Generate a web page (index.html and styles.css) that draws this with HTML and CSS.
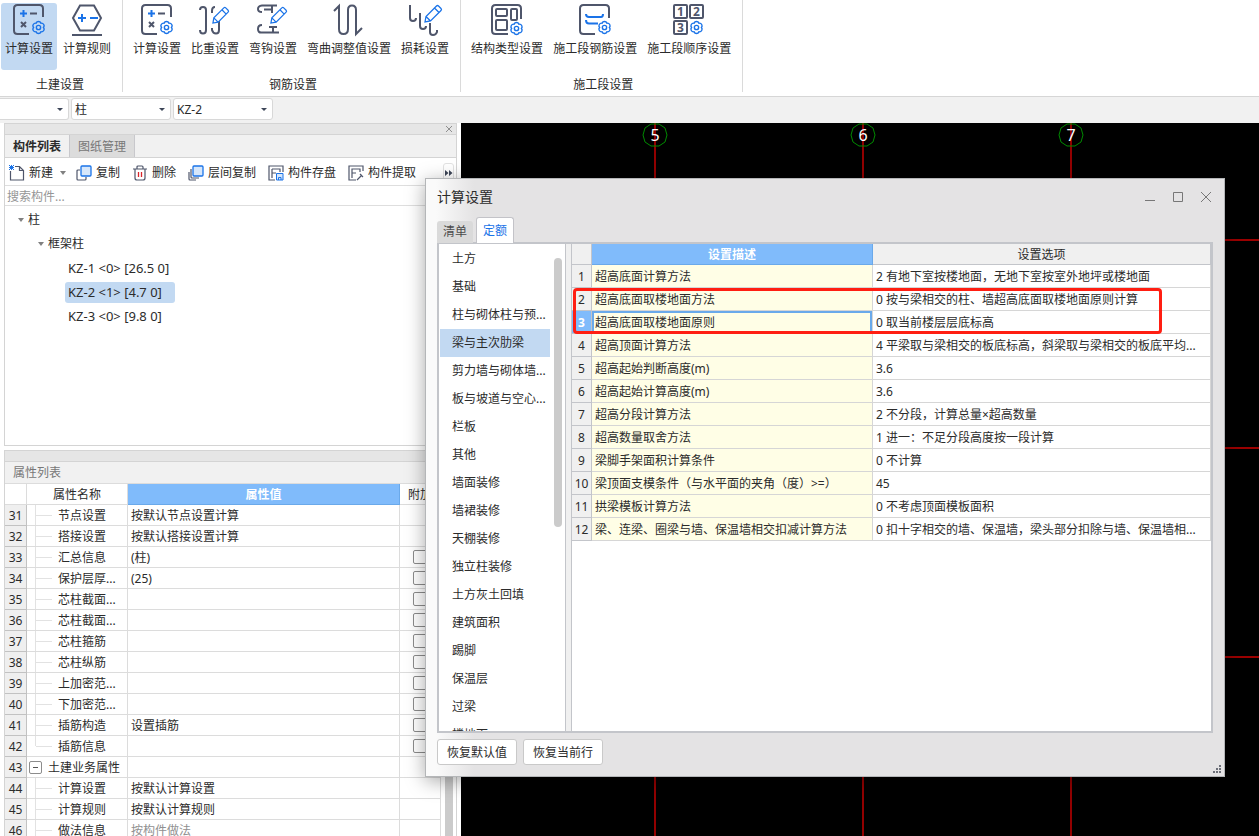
FILE: index.html
```html
<!DOCTYPE html>
<html lang="zh-CN">
<head>
<meta charset="utf-8">
<title>计算设置</title>
<link rel="stylesheet" href="styles.css">
</head>
<body>
<svg class="defs" aria-hidden="true">
  <symbol id="gear" viewBox="0 0 14 14">
    <path class="b" d="M11.600 7A2.450 2.450 0 0 1 9.300 11A2.450 2.450 0 0 1 4.700 11A2.450 2.450 0 0 1 2.400 7A2.450 2.450 0 0 1 4.700 3A2.450 2.450 0 0 1 9.300 3A2.450 2.450 0 0 1 11.600 7Z"/>
    <circle class="b" cx="7" cy="7" r="2"/>
  </symbol>
  <symbol id="calc" viewBox="0 0 32 32">
    <path class="d" d="M30 13V4.500Q30 1 26.500 1H4.500Q1 1 1 4.500V26.500Q1 30 4.500 30H16"/>
    <path class="h" d="M7 9.500H14M10.500 6V13"/>
    <path class="d" d="M17 9.500H24M8 18L13 23M13 18L8 23"/>
    <use href="#gear" x="18" y="16" width="15" height="15"/>
  </symbol>
  <symbol id="pencil" viewBox="0 0 20 20">
    <path class="b w" d="M2 18L3 12.500L13.500 2Q14.500 1 15.500 2L18 4.500Q19 5.500 18 6.500L7.500 17ZM3 12.500L7.500 17M11.500 4L16 8.500"/>
  </symbol>
</svg>

<header class="ribbon">
  <section class="group first">
    <div class="cmds">
      <button class="cmd on"><svg viewBox="0 0 32 32"><use href="#calc"/></svg>计算设置</button>
      <button class="cmd"><svg viewBox="0 0 32 32"><path class="d" d="M9 1.500H23L30 14L23 26.500H9L2 14ZM1 31H31"/><path class="h" d="M7 14H15M11 10V18M19 14H27"/></svg>计算规则</button>
    </div>
    <h2>土建设置</h2>
  </section>
  <section class="group">
    <div class="cmds">
      <button class="cmd"><svg viewBox="0 0 32 32"><use href="#calc"/></svg>计算设置</button>
      <button class="cmd"><svg viewBox="0 0 32 32"><path class="d" d="M1 6Q1 3 4 3T7 6V26Q7 29.500 4 29.500T1 26M13 9V7Q13 3 16 3M20 17V26Q20 29.500 17 29.500T13 26V24"/><use href="#pencil" x="12" y="2" width="19" height="19"/></svg>比重设置</button>
      <button class="cmd"><svg viewBox="0 0 32 32"><path class="d" d="M5 8Q1 8 1 5T5 1.500H20M7 5.500H16M15 2V9M5 21Q1 21 1 25T5 28.500H22M12 23H20M16 23V28"/><use href="#pencil" x="12" y="2" width="19" height="19"/></svg>弯钩设置</button>
      <button class="cmd"><svg viewBox="0 0 32 32"><path class="d" d="M1 7L6 2V25Q6 30 10.500 30T15 25V6Q15 1.500 19 1.500T23 6V30L29 24"/></svg>弯曲调整值设置</button>
      <button class="cmd"><svg viewBox="0 0 32 32"><path class="d" d="M1 1V14Q1 17 4 17T7 14M11 9V22Q11 25 14 25T17 22M21 19V28Q21 31 24 31T28 28V26"/><use href="#pencil" x="14" y="0" width="20" height="20"/></svg>损耗设置</button>
    </div>
    <h2>钢筋设置</h2>
  </section>
  <section class="group">
    <div class="cmds">
      <button class="cmd"><svg viewBox="0 0 32 32"><path class="d" d="M30 15V4.500Q30 1 26.500 1H4.500Q1 1 1 4.500V26.500Q1 30 4.500 30H17"/><rect class="d" x="5" y="5" width="11" height="7" rx="1"/><rect class="d" x="20" y="5" width="6" height="11" rx="1"/><rect class="d" x="5" y="16" width="11" height="10" rx="1"/><use href="#gear" x="18" y="17" width="15" height="15"/></svg>结构类型设置</button>
      <button class="cmd"><svg viewBox="0 0 32 32"><path class="d" d="M30 14V4.500Q30 1 26.500 1H4.500Q1 1 1 4.500V26.500Q1 30 4.500 30H16"/><path class="h" d="M7 10Q7 13 10 13H22Q24 13 24 10M7 16Q7 19.500 10 19.500H19"/><use href="#gear" x="18" y="16" width="15" height="15"/></svg>施工段钢筋设置</button>
      <button class="cmd"><svg viewBox="0 0 32 32"><rect class="d" x="1" y="1" width="13" height="13" rx="1"/><rect class="d" x="17" y="1" width="13" height="13" rx="1"/><rect class="d" x="1" y="17" width="13" height="13" rx="1"/><g class="digit"><text x="7.500" y="12">1</text><text x="23.500" y="12">2</text><text x="7.500" y="28">3</text></g><use href="#gear" x="16" y="16" width="15" height="15"/></svg>施工段顺序设置</button>
    </div>
    <h2>施工段设置</h2>
  </section>
</header>

<nav class="combos">
  <span class="combo short"><select aria-label="楼层"><option></option></select></span>
  <span class="combo"><select aria-label="构件类型"><option>柱</option></select></span>
  <span class="combo"><select aria-label="构件"><option>KZ-2</option></select></span>
</nav>

<main class="work">
  <aside class="side">
    <section class="panel parts">
      <div class="strip"><button class="shut" aria-label="关闭"><svg viewBox="0 0 8 8"><path d="M1 1L7 7M7 1L1 7"/></svg></button></div>
      <div class="ptabs"><button class="ptab on">构件列表</button><button class="ptab">图纸管理</button></div>
      <div class="tools">
        <button class="tool"><svg viewBox="0 0 16 16"><path class="n" d="M6 1.500H10.500L14.500 5.500V15H1.500V6M10.500 1.500V5.500H14.500"/><path class="b t" d="M0 0L5 5M5 0L0 5M2.500 0V5M0 2.500H5"/></svg>新建<i class="caret"></i></button>
        <button class="tool"><svg viewBox="0 0 16 16"><path class="n" d="M4 5H2Q1 5 1 6V14Q1 15 2 15H9Q10 15 10 14V12"/><rect class="b f" x="5" y="1" width="10" height="10" rx="1"/></svg>复制</button>
        <button class="tool"><svg viewBox="0 0 16 16"><path class="n" d="M1 4H15M5 4V2Q5 1 6 1H10Q11 1 11 2V4M3 4V13Q3 15 5 15H11Q13 15 13 13V4"/><path class="r" d="M6.500 7V12M9.500 7V12"/></svg>删除</button>
        <button class="tool"><svg viewBox="0 0 16 16"><path class="n" d="M3 4V12Q3 13 4 13H11M1 7V14Q1 15 2 15H8"/><rect class="b f" x="5" y="1" width="10" height="10" rx="1"/></svg>层间复制</button>
        <button class="tool"><svg viewBox="0 0 16 16"><path class="n" d="M15 7V1H1V15H7M4 13V4M4 4H12V7M4 8H8"/><path class="b t f" d="M8.500 8.500H15V15H8.500ZM10.500 15V12.500H13V15"/></svg>构件存盘</button>
        <button class="tool"><svg viewBox="0 0 16 16"><path class="n" d="M15 6V1H1V15H8M4 13V4H12V7M4 8H8M9 15L14 10M12 9L15 12"/></svg>构件提取</button>
        <button class="more" aria-label="更多"><svg viewBox="0 0 8 6"><path d="M0 0L3.500 3L0 6ZM4 0L7.500 3L4 6Z"/></svg></button>
      </div>
      <input class="search" type="text" placeholder="搜索构件..." aria-label="搜索构件">
      <ul class="tree">
        <li class="l1"><i class="caret"></i>柱</li>
        <li class="l2"><i class="caret"></i>框架柱</li>
        <li class="l3"><span>KZ-1 &lt;0&gt; [26.5 0]</span></li>
        <li class="l3"><span class="on">KZ-2 &lt;1&gt; [4.7 0]</span></li>
        <li class="l3"><span>KZ-3 &lt;0&gt; [9.8 0]</span></li>
      </ul>
    </section>

    <section class="panel props">
      <div class="strip"></div>
      <h3>属性列表</h3>
      <div class="pbody">
        <table class="ptable">
          <colgroup><col class="c0"><col class="c1"><col class="c2"><col class="c3"></colgroup>
          <thead><tr><th></th><th>属性名称</th><th class="hot">属性值</th><th class="clip">附加</th></tr></thead>
          <tbody>
            <tr><td>31</td><td>节点设置</td><td>按默认节点设置计算</td><td></td></tr>
            <tr><td>32</td><td>搭接设置</td><td>按默认搭接设置计算</td><td></td></tr>
            <tr><td>33</td><td>汇总信息</td><td>(柱)</td><td><input type="checkbox" aria-label="汇总信息"></td></tr>
            <tr><td>34</td><td>保护层厚...</td><td>(25)</td><td><input type="checkbox" aria-label="保护层厚"></td></tr>
            <tr><td>35</td><td>芯柱截面...</td><td></td><td><input type="checkbox" aria-label="芯柱截面 35"></td></tr>
            <tr><td>36</td><td>芯柱截面...</td><td></td><td><input type="checkbox" aria-label="芯柱截面 36"></td></tr>
            <tr><td>37</td><td>芯柱箍筋</td><td></td><td><input type="checkbox" aria-label="芯柱箍筋"></td></tr>
            <tr><td>38</td><td>芯柱纵筋</td><td></td><td><input type="checkbox" aria-label="芯柱纵筋"></td></tr>
            <tr><td>39</td><td>上加密范...</td><td></td><td><input type="checkbox" aria-label="上加密范围"></td></tr>
            <tr><td>40</td><td>下加密范...</td><td></td><td><input type="checkbox" aria-label="下加密范围"></td></tr>
            <tr><td>41</td><td>插筋构造</td><td>设置插筋</td><td><input type="checkbox" aria-label="插筋构造"></td></tr>
            <tr class="last"><td>42</td><td>插筋信息</td><td></td><td><input type="checkbox" aria-label="插筋信息"></td></tr>
            <tr class="head"><td>43</td><td><button class="fold" aria-label="折叠"></button>土建业务属性</td><td></td><td></td></tr>
            <tr><td>44</td><td>计算设置</td><td>按默认计算设置</td><td></td></tr>
            <tr><td>45</td><td>计算规则</td><td>按默认计算规则</td><td></td></tr>
            <tr><td>46</td><td>做法信息</td><td class="dim">按构件做法</td><td></td></tr>
          </tbody>
        </table>
        <div class="vbar"></div>
      </div>
    </section>
  </aside>

  <div class="canvas">
    <svg class="grid" aria-label="轴网">
      <path class="axis" d="M194 0V720M402 0V720M610 0V720"/>
      <path class="axis" d="M0 117H3000M0 325H3000M0 534H3000"/>
      <g class="bub">
        <path d="M190 1H198L204 5L206 12L204 19L198 23H190L184 19L182 12L184 5Z"/>
        <path d="M398 1H406L412 5L414 12L412 19L406 23H398L392 19L390 12L392 5Z"/>
        <path d="M606 1H614L620 5L622 12L620 19L614 23H606L600 19L598 12L600 5Z"/>
      </g>
      <g class="num"><text x="194" y="18">5</text><text x="402" y="18">6</text><text x="610" y="18">7</text></g>
    </svg>
  </div>
</main>

<div class="dialog" role="dialog" aria-labelledby="dt">
  <div class="title">
    <h1 id="dt">计算设置</h1>
    <button aria-label="最小化"><svg viewBox="0 0 12 12"><path d="M1 9.500H11"/></svg></button>
    <button aria-label="最大化"><svg viewBox="0 0 12 12"><path d="M1.500 1.500H10.500V10.500H1.500Z"/></svg></button>
    <button aria-label="关闭"><svg viewBox="0 0 12 12"><path d="M1 1L11 11M11 1L1 11"/></svg></button>
  </div>
  <div class="dtabs"><button class="dtab">清单</button><button class="dtab on">定额</button></div>
  <div class="dbody">
    <div class="cats">
      <ul>
        <li>土方</li><li>基础</li><li>柱与砌体柱与预...</li><li class="on">梁与主次肋梁</li><li>剪力墙与砌体墙...</li><li>板与坡道与空心...</li><li>栏板</li><li>其他</li><li>墙面装修</li><li>墙裙装修</li><li>天棚装修</li><li>独立柱装修</li><li>土方灰土回填</li><li>建筑面积</li><li>踢脚</li><li>保温层</li><li>过梁</li><li>楼地面</li>
      </ul>
      <div class="thumb"></div>
    </div>
    <div class="rules">
      <table class="rtable">
        <colgroup><col class="r0"><col class="r1"><col></colgroup>
        <thead><tr><th></th><th class="hot">设置描述</th><th>设置选项</th></tr></thead>
        <tbody>
          <tr><td>1</td><td>超高底面计算方法</td><td>2 有地下室按楼地面，无地下室按室外地坪或楼地面</td></tr>
          <tr><td>2</td><td>超高底面取楼地面方法</td><td>0 按与梁相交的柱、墙超高底面取楼地面原则计算</td></tr>
          <tr class="cur"><td>3</td><td>超高底面取楼地面原则</td><td>0 取当前楼层层底标高</td></tr>
          <tr><td>4</td><td>超高顶面计算方法</td><td>4 平梁取与梁相交的板底标高，斜梁取与梁相交的板底平均...</td></tr>
          <tr><td>5</td><td>超高起始判断高度(m)</td><td>3.6</td></tr>
          <tr><td>6</td><td>超高起始计算高度(m)</td><td>3.6</td></tr>
          <tr><td>7</td><td>超高分段计算方法</td><td>2 不分段，计算总量×超高数量</td></tr>
          <tr><td>8</td><td>超高数量取舍方法</td><td>1 进一：不足分段高度按一段计算</td></tr>
          <tr><td>9</td><td>梁脚手架面积计算条件</td><td>0 不计算</td></tr>
          <tr><td>10</td><td>梁顶面支模条件（与水平面的夹角（度）&gt;=）</td><td>45</td></tr>
          <tr><td>11</td><td>拱梁模板计算方法</td><td>0 不考虑顶面模板面积</td></tr>
          <tr><td>12</td><td>梁、连梁、圈梁与墙、保温墙相交扣减计算方法</td><td>0 扣十字相交的墙、保温墙，梁头部分扣除与墙、保温墙相...</td></tr>
        </tbody>
      </table>
      <div class="mark"></div>
    </div>
  </div>
  <div class="foot"><button>恢复默认值</button><button>恢复当前行</button></div>
  <svg class="grip" viewBox="0 0 8 8"><path d="M6 0h2v2h-2zM3 3h2v2h-2zM6 3h2v2h-2zM0 6h2v2h-2zM3 6h2v2h-2zM6 6h2v2h-2z"/></svg>
</div>
</body>
</html>
```

FILE: styles.css
```css
* { box-sizing: border-box; }
body {
  margin: 0;
  height: 100vh;
  display: flex;
  flex-direction: column;
  overflow: hidden;
  position: relative;
  background: #f1f1f1;
  color: #2b2b2b;
  font: 12px/18px "Noto Sans", "Noto Sans CJK SC", sans-serif;
}
button, input, select { font: inherit; color: inherit; }
button { border: 0; padding: 0; background: none; white-space: nowrap; }
h1, h2, h3, ul { margin: 0; padding: 0; font-weight: 400; list-style: none; }
h2, h3 { font-size: 12px; }
table { border-collapse: separate; border-spacing: 0; table-layout: fixed; }
.defs { position: absolute; width: 0; height: 0; }

/* icon strokes */
.d { fill: none; stroke: #4f566b; stroke-width: 2; }
.h { fill: none; stroke: #1a73e8; stroke-width: 2; }
.b { fill: none; stroke: #1a73e8; stroke-width: 1.3; }
.t { stroke-width: 1; }
.w { fill: #fff; }
.n { fill: none; stroke: #4f566b; stroke-width: 1.2; }
.r { fill: none; stroke: #d9262c; stroke-width: 1.3; }
.f { fill: #d6e7fb; }
.digit { font: 700 12px "Noto Sans", sans-serif; fill: #4f566b; text-anchor: middle; }

/* ribbon */
.ribbon { display: flex; flex: none; height: 97px; background: #fff; border-bottom: 1px solid #d6d6d6; }
.group { display: flex; flex-direction: column; height: 92px; padding: 3px 7px 0 6px; border-right: 1px solid #dadada; }
.group.first { padding-left: 1px; }
.group h2 { margin-top: 6px; padding-left: 4px; text-align: center; }
.cmds { display: flex; gap: 2px; }
.cmd { display: flex; flex-direction: column; align-items: center; gap: 4px; height: 67px; padding: 1px 4px 0; border-radius: 3px; }
.cmd svg { width: 32px; height: 32px; overflow: visible; }
.cmd.on { background: #c2d9f2; }

/* selectors */
.combos { display: flex; flex: none; gap: 2px; height: 26px; padding: 1px 0 3px; }
.combo { position: relative; display: flex; width: 100px; }
.combo.short { width: 69px; }
.combo select { width: 100%; padding: 2px 3px 0; appearance: none; background: #fff; border: 1px solid #d8d8d8; border-radius: 3px; }
.combo.short select { border-left: 0; border-radius: 0 3px 3px 0; }
.combo::after { content: ""; position: absolute; right: 6px; top: 10px; border: 3px solid transparent; border-top-color: #3d4658; border-bottom: 0; }

.work { display: flex; flex: 1; min-height: 0; }
.side { display: flex; flex: none; flex-direction: column; gap: 4px; width: 461px; min-height: 0; padding: 0 4px; background: #fff; }
.panel { display: flex; flex-direction: column; border: 1px solid #d4d4d4; background: #fff; }
.strip { display: flex; flex: none; justify-content: flex-end; height: 11px; padding: 1px 3px 0 0; background: #e6e6e6; border-bottom: 1px solid #d4d4d4; }
.shut { width: 8px; height: 8px; display: flex; }
.shut svg { width: 8px; height: 8px; stroke: #8f8f8f; }
.parts { flex: none; height: 323px; }
.ptabs { display: flex; height: 23px; background: #f1f1f1; border-bottom: 1px solid #d4d4d4; }
.ptab { width: 65px; padding-top: 2px; border-right: 1px solid #c8c8cc; background: #dcdcdc; color: #777; }
.ptab.on { background: #f1f1f1; color: #2b2b2b; font-weight: 700; }
.tools { display: flex; align-items: center; gap: 12px; height: 28px; padding: 2px 2px 0 4px; border-bottom: 1px solid #dedede; }
.tool { display: flex; align-items: center; gap: 4px; }
.tool svg { width: 16px; height: 16px; }
.caret { border: 3px solid transparent; border-top: 4px solid #808080; border-bottom: 0; }
.tool .caret { margin: 0 -2px 0 3px; }
.more { display: flex; align-items: center; justify-content: center; width: 11px; height: 20px; margin-left: auto; border: 1px solid #e2e2e2; border-radius: 3px; }
.more svg { width: 8px; height: 6px; flex: none; fill: #3d4658; }
.search { height: 20px; padding: 2px 2px 0; border: 0; border-bottom: 1px solid #dedede; background: #fff; }
.search::placeholder { color: #969696; }
.tree { padding-top: 2px; }
.tree li { display: flex; align-items: center; height: 24px; gap: 4px; }
.l1 { padding-left: 13px; }
.l2 { padding-left: 33px; }
.l3 { padding-left: 60px; font-size: 13px; }
.l3 span { height: 21px; padding: 1px 3px; min-width: 110px; border-radius: 3px; }
.l3 .on { background: #c2d9f2; }

.props { flex: 1; min-height: 0; overflow: hidden; border-bottom: 0; }
.props h3 { flex: none; height: 22px; padding: 2px 8px; background: #f1f1f1; border-bottom: 1px solid #dcdcdc; color: #777; }
.pbody { display: flex; justify-content: space-between; min-height: 0; padding-right: 3px; }
.ptable { width: 436px; }
.c0 { width: 22px; } .c1 { width: 101px; } .c2 { width: 272px; } .c3 { width: 41px; }
.ptable th, .ptable td { height: 21px; padding: 2px 0 0 3px; line-height: 18px; border-right: 1px solid #dcdcdc; border-bottom: 1px solid #dcdcdc; white-space: nowrap; overflow: hidden; }
.ptable th { font-weight: 400; padding: 2px 0 0; }
.ptable th.clip { text-align: left; padding-left: 8px; }
.ptable td:first-child { padding: 2px 0 0; text-align: center; background: #efefef; border-color: #c2c2c2; }
.ptable td:nth-child(2) { padding-left: 31px; background: linear-gradient(#e2e2e2, #e2e2e2) 8px 0 / 1px 100% no-repeat, linear-gradient(#e2e2e2, #e2e2e2) 9px 10px / 16px 1px no-repeat; border-bottom-color: #dcdcdc; }
.ptable .last td:nth-child(2) { background-size: 1px 10px, 16px 1px; }
.ptable .head td:nth-child(2) { padding-left: 2px; background: none; }
.ptable td:last-child { padding: 0; text-align: center; }
.ptable td.dim { color: #909090; }
.ptable .hot, .rtable .hot { background: #80bbfb; color: #fff; font-weight: 700; border-color: #6aa9ea; }
.fold { width: 13px; height: 13px; margin: -3px 6px 0 0; vertical-align: middle; border: 1px solid #8c8c8c; border-radius: 2px; background: linear-gradient(#555, #555) center / 5px 1px no-repeat; }
input[type="checkbox"] { display: block; width: 14px; height: 14px; margin: 0 auto; appearance: none; border: 1px solid #8c8c8c; border-radius: 2px; background: #fff; }
.vbar { width: 8px; background: #cbcbcb; }

/* drawing area */
.canvas { flex: 1; min-width: 0; background: #000; }
.grid { display: block; width: 100%; height: 100%; }
.axis { fill: none; stroke: #d00000; stroke-width: 1.4; }
.bub path { fill: none; stroke: #008a00; }
.num { font: 16px "Noto Sans", sans-serif; fill: #fff; text-anchor: middle; }

/* dialog */
.dialog {
  position: absolute;
  inset: 178px 34px 59px 425px;
  display: flex;
  flex-direction: column;
  padding: 0 11px;
  border: 1px solid #b4b6b8;
  background: linear-gradient(90deg, #fafafa 10px, #e4e3e4 48px);
  box-shadow: 0 4px 18px rgba(0, 0, 0, .35);
}
.title { display: flex; align-items: center; gap: 16px; height: 38px; margin-right: 1px; padding-bottom: 2px; }
.title h1 { flex: 1; font-size: 14px; line-height: 20px; }
.title svg { display: block; width: 12px; height: 12px; fill: none; stroke: #777; }
.dtabs { display: flex; align-items: flex-end; gap: 3px; height: 26px; margin-bottom: -1px; position: relative; }
.dtab { width: 36px; height: 22px; background: #dadada; border-radius: 3px 3px 0 0; color: #4c4c4c; }
.dtab.on { width: 38px; height: 26px; background: #fff; border: 1px solid #c3c3c8; border-bottom: 0; color: #1a73e8; }
.dbody { display: flex; flex: 1; min-height: 0; gap: 5px; border: 2px solid #c3c5ca; background: #f0f0f0; }
.cats { display: flex; flex: none; justify-content: space-between; width: 127px; padding: 1px 3px 0 1px; overflow: hidden; background: #fff; border-right: 1px solid #c3c5ca; }
.cats ul { width: 110px; }
.cats li { height: 28px; padding: 5px 0 5px 12px; white-space: nowrap; }
.cats .on { background: #c2d9f2; }
.thumb { width: 8px; height: 269px; margin-top: 13px; border-radius: 4px; background: #cbcbcb; }
.rules { position: relative; flex: 1; min-width: 0; overflow: hidden; background: #fff; border-left: 1px solid #c3c5ca; }
.rtable { width: 100%; }
.r0 { width: 20px; } .r1 { width: 281px; }
.rtable th { height: 21px; padding: 2px 0 0; font-weight: 400; background: #f0f0f0; border: solid #c3c5ca; border-width: 0 1px 1px 0; line-height: 18px; }
.rtable .hot { border-color: #6aa9ea; }
.rtable td { height: 23px; padding: 2px 0 0 3px; line-height: 18px; border: solid #d6d6d6; border-width: 0 1px 1px 0; white-space: nowrap; overflow: hidden; }
.rtable td:first-child { padding: 2px 0 0; text-align: center; background: #f0f0f0; border-color: #c3c5ca; }
.rtable td:nth-child(2) { background: #fffee6; }
.rtable .cur td:first-child { background: #80bbfb; color: #fff; font-weight: 700; }
.rtable .cur td:nth-child(2) { box-shadow: inset 0 0 0 2px #6aa9ea; }
.mark { position: absolute; left: 1px; top: 44px; width: 589px; height: 46px; border: 3px solid #ff1e12; border-radius: 4px; }
.foot { display: flex; gap: 6px; padding: 6px 0 11px; }
.foot button { width: 80px; height: 26px; padding-top: 1px; background: #fff; border: 1px solid #c9c9c9; border-radius: 3px; }
.grip { position: absolute; right: 3px; bottom: 3px; width: 8px; height: 8px; fill: #6c6f78; }
```
